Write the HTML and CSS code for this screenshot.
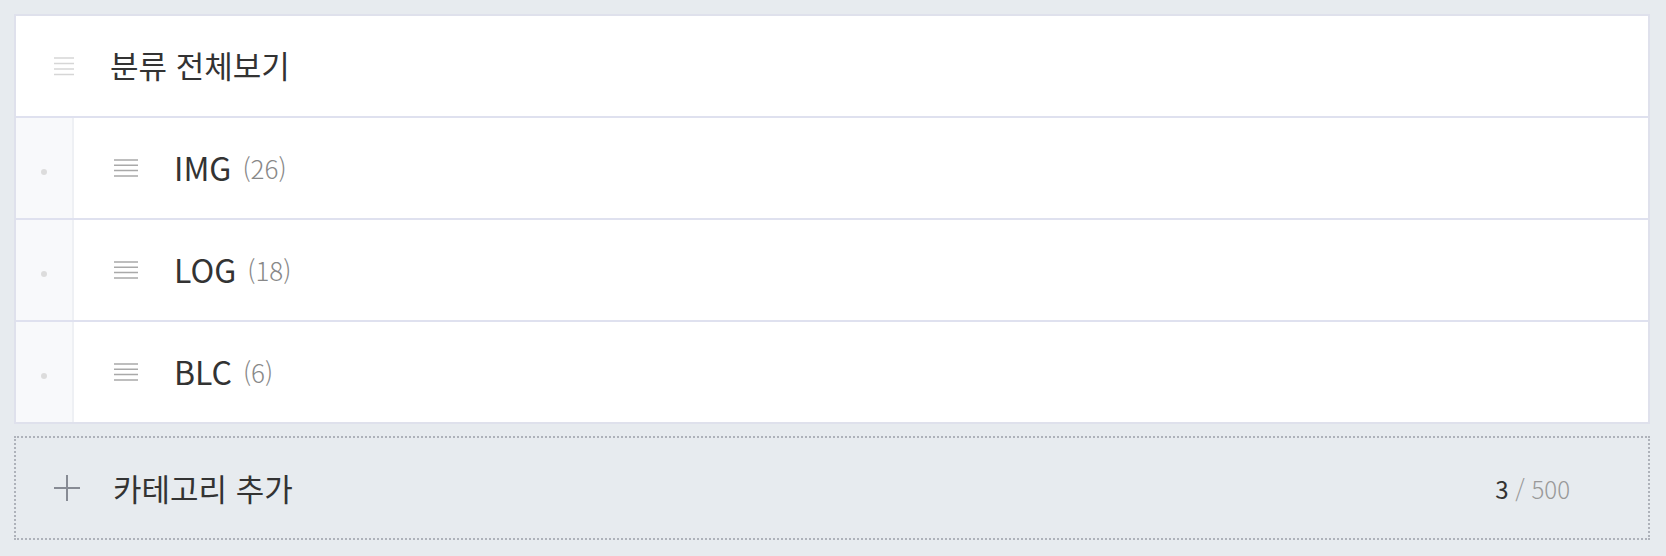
FILE: index.html
```html
<!DOCTYPE html>
<html lang="ko">
<head>
    <meta charset="UTF-8">
    <meta name="viewport" content="width=device-width, initial-scale=1.0">
    <title>카테고리 관리</title>
    <link rel="stylesheet" href="styles.css">
</head>
<body>
    <div class="category-list">
        <div class="category-head">
            <svg class="handle handle-light" width="20" height="20" viewBox="0 0 20 20">
                <path d="M0 2h20M0 7.5h20M0 13h20M0 18.5h20" stroke="#d6d6d6" stroke-width="1.5"/>
            </svg>
            <span class="head-title">분류 전체보기</span>
        </div>
        <div class="category-row">
            <div class="row-side"><span class="dot"></span></div>
            <div class="row-main">
                <svg class="handle" width="24" height="20" viewBox="0 0 24 20">
                    <path d="M0 2h24M0 7.3h24M0 12.6h24M0 18h24" stroke="#a9a9a9" stroke-width="1.5"/>
                </svg>
                <span class="row-name">IMG</span>
                <span class="row-count">(26)</span>
            </div>
        </div>
        <div class="category-row">
            <div class="row-side"><span class="dot"></span></div>
            <div class="row-main">
                <svg class="handle" width="24" height="20" viewBox="0 0 24 20">
                    <path d="M0 2h24M0 7.3h24M0 12.6h24M0 18h24" stroke="#a9a9a9" stroke-width="1.5"/>
                </svg>
                <span class="row-name">LOG</span>
                <span class="row-count">(18)</span>
            </div>
        </div>
        <div class="category-row">
            <div class="row-side"><span class="dot"></span></div>
            <div class="row-main">
                <svg class="handle" width="24" height="20" viewBox="0 0 24 20">
                    <path d="M0 2h24M0 7.3h24M0 12.6h24M0 18h24" stroke="#a9a9a9" stroke-width="1.5"/>
                </svg>
                <span class="row-name">BLC</span>
                <span class="row-count">(6)</span>
            </div>
        </div>
    </div>

    <div class="add-category">
        <svg class="plus" width="26" height="26" viewBox="0 0 26 26">
            <path d="M0 13h26M13 0v26" stroke="#878b94" stroke-width="2"/>
        </svg>
        <span class="add-label">카테고리 추가</span>
        <span class="add-count"><b>3</b> / 500</span>
    </div>
</body>
</html>
```

FILE: styles.css
```css
body {
    margin: 0;
    padding: 14px 16px 0 14px;
    background-color: #e7ebef;
    font-family: "Noto Sans CJK KR", "Noto Sans", sans-serif;
    color: #333;
}
.category-list {
    background-color: #fff;
    border: 2px solid #dfe1ec;
}
.category-head {
    display: flex;
    align-items: center;
    height: 100px;
    padding-left: 38px;
}
.handle {
    display: block;
    flex-shrink: 0;
}
.head-title {
    margin-left: 36px;
    margin-top: -4px;
    font-size: 31px;
}
.category-row {
    display: flex;
    height: 100px;
    border-top: 2px solid #dfe1ef;
}
.row-side {
    width: 56px;
    background-color: #f8f9fb;
    border-right: 2px solid #eef0f4;
    display: flex;
    align-items: center;
    justify-content: center;
}
.dot {
    width: 6px;
    height: 6px;
    border-radius: 50%;
    background-color: #dcdcdc;
    margin-top: 8px;
    margin-left: -1px;
}
.row-main {
    flex: 1;
    display: flex;
    align-items: center;
    padding-left: 40px;
}
.row-name {
    margin-left: 36px;
    margin-top: -2px;
    font-size: 32px;
}
.row-count {
    margin-left: 11px;
    margin-top: -2px;
    font-size: 26px;
    font-weight: 300;
    color: #888;
}
.add-category {
    display: flex;
    align-items: center;
    height: 100px;
    margin-top: 12px;
    padding: 0 78px 0 38px;
    border: 2px dotted #aeb2ba;
}
.add-label {
    margin-left: 33px;
    margin-top: -2px;
    font-size: 31px;
}
.add-count {
    margin-left: auto;
    font-size: 24px;
    font-weight: 300;
    color: #999;
}
.add-count b {
    font-weight: 400;
    color: #333;
}
```
